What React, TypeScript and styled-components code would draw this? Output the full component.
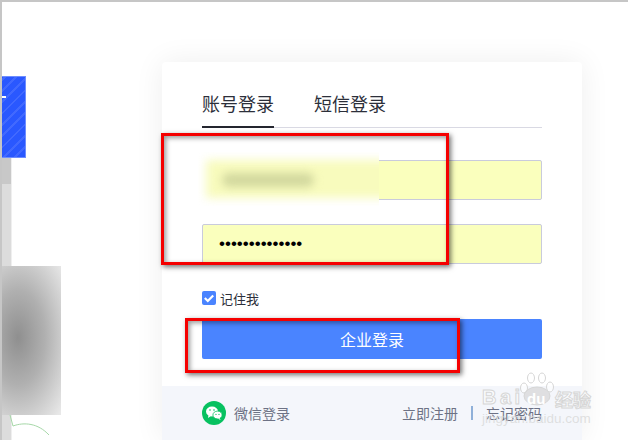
import styled, { createGlobalStyle } from 'styled-components'

const GlobalStyle = createGlobalStyle`
  html, body {
    margin: 0;
    padding: 0;
    background: #fff;
  }
  body {
    font-family: "Liberation Sans", "Noto Sans CJK SC", sans-serif;
  }
`

const redBoxes = [
  { left: 159, top: 131, width: 288, height: 132 },
  { left: 183, top: 316, width: 275, height: 55 }
]

const App = () => {
  return (
    <Page>
      <GlobalStyle />
      <Hero>
        <BlueTile>
          <TileDash />
        </BlueTile>
        <GreyStrip $dark />
        <GreyStrip />
        <BlurBlock />
        <svg width="60" height="25" viewBox="0 0 60 25" fill="none">
          <rect x="0" y="0" width="9" height="25" fill="#dcdcdc" />
          <rect x="9" y="0" width="1" height="25" fill="#efefef" />
          <path d="M8 0 L11 11 C22 7 36 8 47 20" stroke="#a6d8a8" strokeWidth="1" />
        </svg>
      </Hero>
      <Card>
        <CardBody>
          <Tabs>
            <Tab $active>账号登录</Tab>
            <Tab>短信登录</Tab>
          </Tabs>
          <Field type="text" defaultValue="" readOnly />
          <Field type="password" defaultValue="12345678901234" readOnly />
          <Remember>
            <CheckBox>
              <svg width="14" height="14" viewBox="0 0 14 14" fill="none">
                <path d="M2.8 7 L5.8 10 L11.2 4.4" stroke="#fff" strokeWidth="2.2" />
              </svg>
            </CheckBox>
            记住我
          </Remember>
          <SubmitButton>企业登录</SubmitButton>
        </CardBody>
        <CardFooter>
          <WechatLogin>
            <svg width="24" height="24" viewBox="0 0 24 24">
              <circle cx="12" cy="12" r="12" fill="#07c160" />
              <ellipse cx="10" cy="10.5" rx="6" ry="5" fill="#fff" />
              <path d="M6.5 14 L6 17 L9 15 Z" fill="#fff" />
              <ellipse cx="15.5" cy="14" rx="4.6" ry="3.9" fill="#fff" stroke="#07c160" strokeWidth="0.8" />
              <path d="M17.5 17 L18.6 19 L15.8 17.6 Z" fill="#fff" />
              <circle cx="8" cy="9" r="0.8" fill="#07c160" />
              <circle cx="12" cy="9" r="0.8" fill="#07c160" />
              <circle cx="14" cy="13.4" r="0.6" fill="#07c160" />
              <circle cx="17" cy="13.4" r="0.6" fill="#07c160" />
            </svg>
            微信登录
          </WechatLogin>
          <FooterLinks>
            <span>立即注册</span>
            <FooterDivider />
            <span>忘记密码</span>
          </FooterLinks>
        </CardFooter>
      </Card>
      <Blurred />
      {redBoxes.map((box) => (
        <RedBox key={box.left} style={box} />
      ))}
      <Watermark>
        <svg width="36" height="35" viewBox="0 0 36 35" fill="#fff" fillOpacity="0.65" stroke="#d6d6d6">
          <ellipse cx="5" cy="16" rx="3.5" ry="5" />
          <ellipse cx="12" cy="6" rx="3.5" ry="5" />
          <ellipse cx="23" cy="6" rx="3.5" ry="5" />
          <ellipse cx="31" cy="15" rx="3.5" ry="5" />
          <ellipse cx="18" cy="24" rx="13" ry="9" fill="#d6d6d6" fillOpacity="0.7" />
        </svg>
        <WatermarkTitle>Bai</WatermarkTitle>
        <WatermarkDu>du</WatermarkDu>
        <WatermarkCn>经验</WatermarkCn>
        <WatermarkUrl>jingyan.baidu.com</WatermarkUrl>
      </Watermark>
    </Page>
  )
}

export default App

const Page = styled.div`
  position: relative;
  display: flex;
  box-sizing: border-box;
  width: 628px;
  height: 440px;
  overflow: hidden;
  border-top: 2px solid #c6c6c6;
  border-left: 2px solid #c6c6c6;
  background: #fff;
`

const Hero = styled.div`
  display: flex;
  flex-direction: column;
  flex: none;
  width: 160px;
  padding-top: 74px;
  svg {
    display: block;
  }
`

const BlueTile = styled.div`
  position: relative;
  box-sizing: border-box;
  width: 24px;
  height: 82px;
  border: solid #6d8dff;
  border-width: 1px 1px 1px 0;
  background: repeating-linear-gradient(-45deg, #2a58ff 0 6px, #4169ff 6px 8px);
`

const TileDash = styled.div`
  position: absolute;
  left: 0;
  top: 19px;
  width: 4px;
  height: 2px;
  background: #fff;
`

const GreyStrip = styled.div<{ $dark?: boolean }>`
  flex: none;
  width: 9px;
  height: ${(p) => (p.$dark ? '26px' : '82px')};
  border-right: 1px solid #efefef;
  background: ${(p) => (p.$dark ? '#c8c8c8' : '#dcdcdc')};
`

const BlurBlock = styled.div`
  flex: none;
  width: 59px;
  height: 149px;
  background: radial-gradient(ellipse 60px 105px at 16px 48%, #8f8f8f, #b0b0b0 45%, #e8e8e8 100%);
`

const Card = styled.div`
  display: flex;
  flex-direction: column;
  flex: none;
  width: 420px;
  height: 378px;
  margin-top: 60px;
  border-radius: 4px 4px 0 0;
  background: #fff;
  box-shadow: 0 0 30px rgba(0, 0, 0, 0.07);
`

const CardBody = styled.div`
  display: flex;
  flex-direction: column;
  flex: 1;
  padding: 0 40px;
`

const Tabs = styled.div`
  display: flex;
  gap: 40px;
  height: 66px;
  box-sizing: border-box;
  padding-top: 30px;
  border-bottom: 1px solid #d9d9e3;
`

const Tab = styled.div<{ $active?: boolean }>`
  height: 36px;
  box-sizing: border-box;
  font-size: 18px;
  line-height: 26px;
  color: #2c2f3a;
  border-bottom: 2px solid ${(p) => (p.$active ? '#24262f' : 'transparent')};
`

const Field = styled.input`
  display: block;
  box-sizing: border-box;
  width: 340px;
  height: 40px;
  margin-top: 24px;
  padding: 0 16px;
  border: 1px solid #c9cbdc;
  border-radius: 2px;
  outline: none;
  background: #faffbd;
  font-family: "Liberation Sans", sans-serif;
  font-size: 17px;
  color: #000;
  &:first-of-type {
    margin-top: 32px;
  }
`

const Remember = styled.label`
  display: flex;
  align-items: center;
  gap: 4px;
  height: 14px;
  margin-top: 27px;
  font-size: 13px;
  color: #2c2f3a;
`

const CheckBox = styled.span`
  display: flex;
  width: 14px;
  height: 14px;
  border-radius: 2px;
  background: #4a84ff;
`

const SubmitButton = styled.button`
  width: 340px;
  height: 40px;
  margin-top: 14px;
  border: none;
  border-radius: 2px;
  background: #4a84ff;
  color: #fff;
  font-family: inherit;
  font-size: 16px;
`

const CardFooter = styled.div`
  display: flex;
  align-items: center;
  justify-content: space-between;
  box-sizing: border-box;
  height: 54px;
  padding: 0 40px;
  background: #f4f6fb;
  font-size: 14px;
  color: #6d7285;
`

const WechatLogin = styled.div`
  display: flex;
  align-items: center;
  gap: 8px;
`

const FooterLinks = styled.div`
  display: flex;
  align-items: center;
  gap: 13px;
`

const FooterDivider = styled.i`
  width: 2px;
  height: 14px;
  background: #8fb0d9;
`

const Blurred = styled.div`
  position: absolute;
  left: 196px;
  top: 150px;
  width: 181px;
  height: 54px;
  overflow: hidden;
  background: #fff;
  &::before {
    content: '';
    position: absolute;
    left: 8px;
    top: 8px;
    right: -20px;
    bottom: 8px;
    background: #f8fbbd;
    filter: blur(5px);
  }
  &::after {
    content: '';
    position: absolute;
    left: 24px;
    top: 21px;
    width: 92px;
    height: 14px;
    border-radius: 7px;
    background: #d2d89e;
    filter: blur(4px);
  }
`

const RedBox = styled.div`
  position: absolute;
  box-sizing: border-box;
  border: 3px solid #f50000;
  box-shadow: 2px 2px 5px rgba(0, 0, 0, 0.55), inset 2px 2px 5px rgba(0, 0, 0, 0.4);
`

const Watermark = styled.div`
  position: absolute;
  left: 480px;
  top: 370px;
  width: 114px;
  height: 54px;
  svg {
    position: absolute;
    left: 37px;
    top: 0;
  }
`

const WatermarkTitle = styled.div`
  position: absolute;
  left: 0;
  top: 14px;
  font-size: 20px;
  font-weight: 700;
  letter-spacing: 3.5px;
  color: rgba(255, 255, 255, 0.6);
  -webkit-text-stroke: 1px #d6d6d6;
`

const WatermarkDu = styled.div`
  position: absolute;
  left: 45px;
  top: 18px;
  font-size: 15px;
  font-weight: 700;
  color: #fff;
`

const WatermarkCn = styled.div`
  position: absolute;
  left: 73px;
  top: 14px;
  font-size: 18px;
  font-weight: 700;
  color: rgba(255, 255, 255, 0.6);
  -webkit-text-stroke: 1px #d6d6d6;
`

const WatermarkUrl = styled.div`
  position: absolute;
  left: 0;
  top: 39px;
  font-size: 13.5px;
  white-space: nowrap;
  color: rgba(214, 214, 214, 0.75);
`
